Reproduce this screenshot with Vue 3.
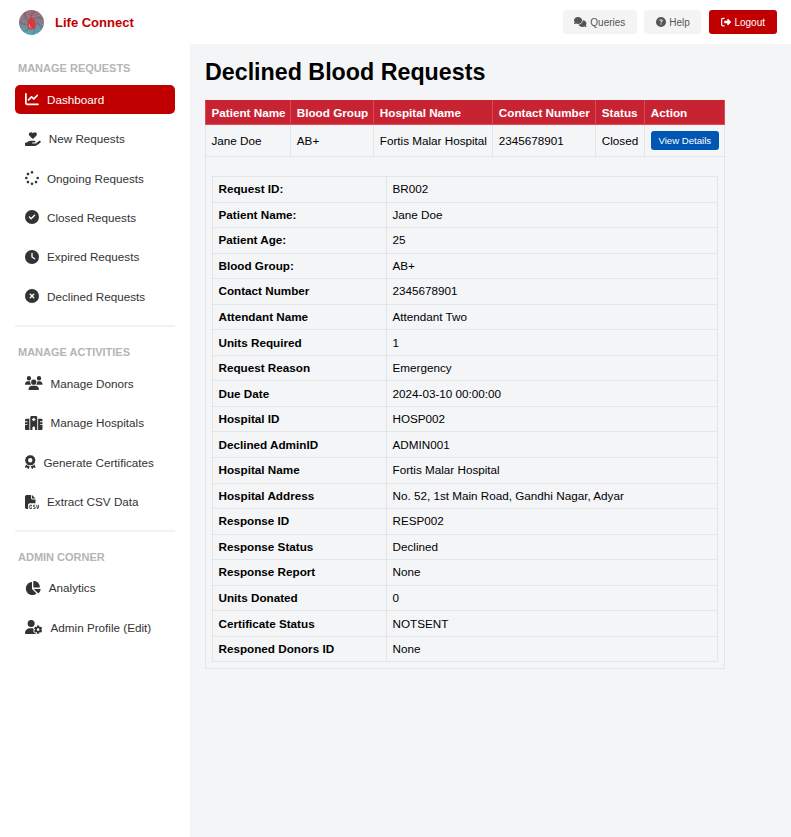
<script setup>
const icons = {
  chart: [512, 'M64 64c0-17.7-14.3-32-32-32S0 46.3 0 64V400c0 44.2 35.8 80 80 80H480c17.7 0 32-14.3 32-32s-14.3-32-32-32H80c-8.8 0-16-7.2-16-16V64zm406.6 86.6c12.5-12.5 12.5-32.8 0-45.3s-32.8-12.5-45.3 0L320 210.7l-57.4-57.4c-12.5-12.5-32.8-12.5-45.3 0l-112 112c-12.5 12.5-12.5 32.8 0 45.3s32.8 12.5 45.3 0L240 221.3l57.4 57.4c12.5 12.5 32.8 12.5 45.3 0l128-128z'],
  heart: [576, 'M163.9 136.9c-29.4-29.8-29.4-78.2 0-108s77-29.8 106.4 0l17.7 18 17.7-18c29.4-29.8 77-29.8 106.4 0s29.4 78.2 0 108L310.5 240.1c-6.2 6.3-14.3 9.4-22.5 9.4s-16.3-3.1-22.5-9.4L163.9 136.9zM568.2 336.3c13.1 17.8 9.3 42.8-8.5 55.9L433.1 485.5c-23.4 17.2-51.6 26.5-80.7 26.5H192 32c-17.7 0-32-14.3-32-32V416c0-17.7 14.3-32 32-32H68.8l44.9-36c22.7-18.2 50.9-28 80-28H272h16 64c17.7 0 32 14.3 32 32s-14.3 32-32 32H288 272c-8.8 0-16 7.2-16 16s7.2 16 16 16H392.6l119.7-88.2c17.8-13.1 42.8-9.3 55.9 8.5z'],
  spinner: [512, 'M304 48a48 48 0 1 0 -96 0 48 48 0 1 0 96 0zm0 416a48 48 0 1 0 -96 0 48 48 0 1 0 96 0zM48 304a48 48 0 1 0 0-96 48 48 0 1 0 0 96zm464-48a48 48 0 1 0 -96 0 48 48 0 1 0 96 0zM142.9 437A48 48 0 1 0 75 369.1 48 48 0 1 0 142.9 437zm0-294.2A48 48 0 1 0 75 75a48 48 0 1 0 67.9 67.9zM369.1 437A48 48 0 1 0 437 369.1 48 48 0 1 0 369.1 437z'],
  check: [512, 'M256 512A256 256 0 1 0 256 0a256 256 0 1 0 0 512zM369 209L241 337c-9.4 9.4-24.6 9.4-33.9 0l-64-64c-9.4-9.4-9.4-24.6 0-33.9s24.6-9.4 33.9 0l47 47L335 175c9.4-9.4 24.6-9.4 33.9 0s9.4 24.6 0 33.9z'],
  clock: [512, 'M256 0a256 256 0 1 1 0 512A256 256 0 1 1 256 0zM232 120V256c0 8 4 15.5 10.7 20l96 64c11 7.4 25.9 4.4 33.3-6.7s4.4-25.9-6.7-33.3L280 243.2V120c0-13.3-10.7-24-24-24s-24 10.7-24 24z'],
  xmark: [512, 'M256 512A256 256 0 1 0 256 0a256 256 0 1 0 0 512zM175 175c9.4-9.4 24.6-9.4 33.9 0l47 47 47-47c9.4-9.4 24.6-9.4 33.9 0s9.4 24.6 0 33.9l-47 47 47 47c9.4 9.4 9.4 24.6 0 33.9s-24.6 9.4-33.9 0l-47-47-47 47c-9.4 9.4-24.6 9.4-33.9 0s-9.4-24.6 0-33.9l47-47-47-47c-9.4-9.4-9.4-24.6 0-33.9z'],
  users: [640, 'M144 0a80 80 0 1 1 0 160A80 80 0 1 1 144 0zM512 0a80 80 0 1 1 0 160A80 80 0 1 1 512 0zM0 298.7C0 239.8 47.8 192 106.7 192h42.7c15.9 0 31 3.5 44.6 9.7c-1.3 7.2-1.9 14.7-1.9 22.3c0 38.2 16.8 72.5 43.3 96c-.2 0-.4 0-.7 0H21.3C9.6 320 0 310.4 0 298.7zM405.3 320c-.2 0-.4 0-.7 0c26.6-23.5 43.3-57.8 43.3-96c0-7.6-.7-15-1.9-22.3c13.6-6.3 28.7-9.7 44.6-9.7h42.7C592.2 192 640 239.8 640 298.7c0 11.8-9.6 21.3-21.3 21.3H405.3zM224 224a96 96 0 1 1 192 0 96 96 0 1 1 -192 0zM128 485.3C128 411.7 187.7 352 261.3 352H378.7C452.3 352 512 411.7 512 485.3c0 14.7-11.9 26.7-26.7 26.7H154.7c-14.7 0-26.7-11.9-26.7-26.7z'],
  hospital: [640, 'M192 48c0-26.5 21.5-48 48-48H400c26.5 0 48 21.5 48 48V512H368V432c0-26.5-21.5-48-48-48s-48 21.5-48 48v80H192V48zM48 96H160V512H48c-26.5 0-48-21.5-48-48V320H80c8.8 0 16-7.2 16-16s-7.2-16-16-16H0V224H80c8.8 0 16-7.2 16-16s-7.2-16-16-16H0V144c0-26.5 21.5-48 48-48zm544 0c26.5 0 48 21.5 48 48v48H560c-8.8 0-16 7.2-16 16s7.2 16 16 16h80v64H560c-8.8 0-16 7.2-16 16s7.2 16 16 16h80V464c0 26.5-21.5 48-48 48H480V96H592zM312 64c-8.8 0-16 7.2-16 16v24H272c-8.8 0-16 7.2-16 16v16c0 8.8 7.2 16 16 16h24v24c0 8.8 7.2 16 16 16h16c8.8 0 16-7.2 16-16V152h24c8.8 0 16-7.2 16-16V120c0-8.8-7.2-16-16-16H344V80c0-8.8-7.2-16-16-16H312z'],
  award: [384, 'M173.8 5.5c11-7.3 25.4-7.3 36.4 0L228 17.2c6 3.9 13 5.8 20.1 5.4l21.3-1.3c13.2-.8 25.6 6.4 31.5 18.2l9.6 19.1c3.2 6.4 8.4 11.5 14.7 14.7L344.5 83c11.8 5.9 19 18.3 18.2 31.5l-1.3 21.3c-.4 7.1 1.5 14.2 5.4 20.1l11.8 17.8c7.3 11 7.3 25.4 0 36.4L366.8 228c-3.9 6-5.8 13-5.4 20.1l1.3 21.3c.8 13.2-6.4 25.6-18.2 31.5l-19.1 9.6c-6.4 3.2-11.5 8.4-14.7 14.7L301 344.5c-5.9 11.8-18.3 19-31.5 18.2l-21.3-1.3c-7.1-.4-14.2 1.5-20.1 5.4l-17.8 11.8c-11 7.3-25.4 7.3-36.4 0L156 366.8c-6-3.9-13-5.8-20.1-5.4l-21.3 1.3c-13.2 .8-25.6-6.4-31.5-18.2l-9.6-19.1c-3.2-6.4-8.4-11.5-14.7-14.7L39.5 301c-11.8-5.9-19-18.3-18.2-31.5l1.3-21.3c.4-7.1-1.5-14.2-5.4-20.1L5.5 210.2c-7.3-11-7.3-25.4 0-36.4L17.2 156c3.9-6 5.8-13 5.4-20.1l-1.3-21.3c-.8-13.2 6.4-25.6 18.2-31.5l19.1-9.6C65 70.2 70.2 65 73.4 58.6L83 39.5c5.9-11.8 18.3-19 31.5-18.2l21.3 1.3c7.1 .4 14.2-1.5 20.1-5.4L173.8 5.5zM272 192a80 80 0 1 0 -160 0 80 80 0 1 0 160 0zM1.3 441.8L44.4 339.3c.2 .1 .3 .2 .4 .4l9.6 19.1c11.7 23.2 36 37.3 62 35.8l21.3-1.3c.2 0 .5 0 .7 .2l17.8 11.8c5.1 3.3 10.5 5.9 16.1 7.7l-37.6 89.3c-2.3 5.5-7.4 9.2-13.3 9.7s-11.6-2.2-14.8-7.2L74.4 455.5l-56.1 8.3c-5.7 .8-11.4-1.5-15-6s-4.3-10.7-2.1-16zm248 60.4L211.7 413c5.6-1.8 11-4.3 16.1-7.7l17.8-11.8c.2-.1 .4-.2 .7-.2l21.3 1.3c26 1.5 50.3-12.6 62-35.8l9.6-19.1c.1-.2 .2-.3 .4-.4l43.2 102.5c2.2 5.3 1.4 11.4-2.1 16s-9.3 6.9-15 6l-56.1-8.3-32.2 49.2c-3.2 5-8.9 7.7-14.8 7.2s-11-4.3-13.3-9.7z'],
  csv: [512, 'M0 64C0 28.7 28.7 0 64 0H224V128c0 17.7 14.3 32 32 32H384V304H176c-35.3 0-64 28.7-64 64V512H64c-35.3 0-64-28.7-64-64V64zm384 64H256V0L384 128zM200 352h16c22.1 0 40 17.9 40 40v8c0 8.8-7.2 16-16 16s-16-7.2-16-16v-8c0-4.4-3.6-8-8-8H200c-4.4 0-8 3.6-8 8v80c0 4.4 3.6 8 8 8h16c4.4 0 8-3.6 8-8v-8c0-8.8 7.2-16 16-16s16 7.2 16 16v8c0 22.1-17.9 40-40 40H200c-22.1 0-40-17.9-40-40V392c0-22.1 17.9-40 40-40zm133.1 0H368c8.8 0 16 7.2 16 16s-7.2 16-16 16H333.1c-7.2 0-13.1 5.9-13.1 13.1c0 5.2 3 9.9 7.8 12l37.4 16.6c16.3 7.2 26.8 23.4 26.8 41.2c0 24.9-20.2 45.1-45.1 45.1H304c-8.8 0-16-7.2-16-16s7.2-16 16-16h47.1c7.2 0 13.1-5.9 13.1-13.1c0-5.2-3-9.9-7.8-12l-37.4-16.6c-16.3-7.2-26.8-23.4-26.8-41.2c0-24.9 20.2-45.1 45.1-45.1zm98.9 0c8.8 0 16 7.2 16 16v31.6c0 23 5.5 45.6 16 66c10.5-20.3 16-42.9 16-66V368c0-8.8 7.2-16 16-16s16 7.2 16 16v31.6c0 34.7-10.3 68.7-29.6 97.6l-5.1 7.7c-3 4.5-8 7.1-13.3 7.1s-10.3-2.7-13.3-7.1l-5.1-7.7c-19.3-28.9-29.6-62.9-29.6-97.6V368c0-8.8 7.2-16 16-16z'],
  pie: [576, 'M304 240V16.6c0-9 7-16.6 16-16.6C443.7 0 544 100.3 544 224c0 9-7.6 16-16.6 16H304zM32 272C32 150.7 122.1 50.3 239 34.3c9.2-1.3 17 6.1 17 15.4V288L412.5 444.5c6.7 6.7 6.2 17.7-1.5 23.1C371.8 495.6 323.8 512 272 512C139.5 512 32 404.6 32 272zm526.4 16c9.3 0 16.6 7.8 15.4 17c-7.7 55.9-34.6 105.6-73.9 142.3c-6 5.6-15.4 5.2-21.2-.7L320 288H558.4z'],
  usergear: [640, 'M224 0a128 128 0 1 1 0 256A128 128 0 1 1 224 0zM178.3 304h91.4c11.8 0 23.4 1.2 34.5 3.3c-2.1 18.5 7.4 35.6 21.8 44.8c-16.6 10.6-26.7 31.6-20 53.3c4 12.9 9.4 25.5 16.4 37.6s15.2 23.1 24.4 33c15.7 16.9 39.6 18.4 57.2 8.7v.9c0 9.2 2.7 18.5 7.9 26.3H29.7C13.3 512 0 498.7 0 482.3C0 383.8 79.8 304 178.3 304zM436 218.2c0-7 4.5-13.3 11.3-14.8c10.5-2.4 21.5-3.7 32.7-3.7s22.2 1.3 32.7 3.7c6.8 1.5 11.3 7.8 11.3 14.8v30.6c7.9 3.4 15.4 7.7 22.3 12.8l24.9-14.3c6.1-3.5 13.7-2.7 18.5 2.4c7.6 8.1 14.3 17.2 20.1 27.2s10.3 20.4 13.5 31c2.1 6.7-1.1 13.7-7.2 17.2l-25 14.4c.4 4 .7 8.1 .7 12.3s-.2 8.2-.7 12.3l25 14.4c6.1 3.5 9.2 10.5 7.2 17.2c-3.3 10.6-7.8 21-13.5 31s-12.5 19.1-20.1 27.2c-4.8 5.1-12.5 5.9-18.5 2.4l-24.9-14.3c-6.9 5.1-14.3 9.4-22.3 12.8l0 30.6c0 7-4.5 13.3-11.3 14.8c-10.5 2.4-21.5 3.7-32.7 3.7s-22.2-1.3-32.7-3.7c-6.8-1.5-11.3-7.8-11.3-14.8V454.8c-8-3.4-15.6-7.7-22.5-12.9l-24.7 14.3c-6.1 3.5-13.7 2.7-18.5-2.4c-7.6-8.1-14.3-17.2-20.1-27.2s-10.3-20.4-13.5-31c-2.1-6.7 1.1-13.7 7.2-17.2l24.8-14.3c-.4-4.1-.7-8.2-.7-12.4s.2-8.3 .7-12.4L343.8 325c-6.1-3.5-9.2-10.5-7.2-17.2c3.3-10.6 7.7-21 13.5-31s12.5-19.1 20.1-27.2c4.8-5.1 12.4-5.9 18.5-2.4l24.8 14.3c6.9-5.1 14.5-9.4 22.5-12.9V218.2zm92.1 133.5a48.1 48.1 0 1 0 -96.1 0 48.1 48.1 0 1 0 96.1 0z'],
  comments: [640, 'M208 352c114.9 0 208-78.8 208-176S322.9 0 208 0S0 78.8 0 176c0 38.6 14.7 74.3 39.6 103.4c-3.5 9.4-8.7 17.7-14.2 24.7c-4.8 6.2-9.7 11-13.3 14.3c-1.8 1.6-3.3 2.9-4.3 3.7c-.5 .4-.9 .7-1.1 .8l-.2 .2 0 0 0 0C1 327.2-1.4 334.4 .8 340.9S9.1 352 16 352c21.8 0 43.8-5.6 62.1-12.5c9.2-3.5 17.8-7.4 25.3-11.4C134.1 343.3 169.8 352 208 352zM448 176c0 112.3-99.1 196.9-216.5 207C255.8 457.4 336.4 512 432 512c38.2 0 73.9-8.7 104.7-23.9c7.5 4 16 7.9 25.2 11.4c18.3 6.9 40.3 12.5 62.1 12.5c6.9 0 13.1-4.5 15.2-11.1c2.1-6.6-.2-13.8-5.8-17.9l0 0 0 0-.2-.2c-.2-.2-.6-.4-1.1-.8c-1-.8-2.5-2-4.3-3.7c-3.6-3.3-8.5-8.1-13.3-14.3c-5.5-7-10.7-15.4-14.2-24.7c24.9-29 39.6-64.7 39.6-103.4c0-92.8-84.9-168.9-192.6-175.5c.4 5.1 .6 10.3 .6 15.5z'],
  question: [512, 'M256 512A256 256 0 1 0 256 0a256 256 0 1 0 0 512zM169.8 165.3c7.9-22.3 29.1-37.3 52.8-37.3h58.3c34.9 0 63.1 28.3 63.1 63.1c0 22.6-12.1 43.5-31.7 54.8L280 264.4c-.2 13-10.9 23.6-24 23.6c-13.3 0-24-10.7-24-24V250.5c0-8.6 4.6-16.5 12.1-20.8l44.3-25.4c4.7-2.7 7.6-7.7 7.6-13.1c0-8.4-6.8-15.1-15.1-15.1H222.6c-3.4 0-6.4 2.1-7.5 5.3l-.4 1.2c-4.4 12.5-18.2 19-30.6 14.6s-19-18.2-14.6-30.6l.4-1.2zM224 352a32 32 0 1 1 64 0 32 32 0 1 1 -64 0z'],
  logout: [512, 'M377.9 105.9L500.7 228.7c7.2 7.2 11.3 17.1 11.3 27.3s-4.1 20.1-11.3 27.3L377.9 406.1c-6.4 6.4-15 9.9-24 9.9c-18.7 0-33.9-15.2-33.9-33.9l0-62.1-128 0c-17.7 0-32-14.3-32-32l0-64c0-17.7 14.3-32 32-32l128 0 0-62.1c0-18.7 15.2-33.9 33.9-33.9c9 0 17.6 3.5 24 9.9zM160 96L96 96c-17.7 0-32 14.3-32 32l0 256c0 17.7 14.3 32 32 32l64 0c17.7 0 32 14.3 32 32s-14.3 32-32 32l-64 0c-53 0-96-43-96-96L0 128C0 75 43 32 96 32l64 0c17.7 0 32 14.3 32 32s-14.3 32-32 32z']
}

const sections = [
  {
    title: 'MANAGE REQUESTS',
    items: [
      { label: 'Dashboard', icon: 'chart', active: true },
      { label: 'New Requests', icon: 'heart' },
      { label: 'Ongoing Requests', icon: 'spinner' },
      { label: 'Closed Requests', icon: 'check' },
      { label: 'Expired Requests', icon: 'clock' },
      { label: 'Declined Requests', icon: 'xmark' }
    ]
  },
  {
    title: 'MANAGE ACTIVITIES',
    items: [
      { label: 'Manage Donors', icon: 'users' },
      { label: 'Manage Hospitals', icon: 'hospital' },
      { label: 'Generate Certificates', icon: 'award' },
      { label: 'Extract CSV Data', icon: 'csv' }
    ]
  },
  {
    title: 'ADMIN CORNER',
    items: [
      { label: 'Analytics', icon: 'pie' },
      { label: 'Admin Profile (Edit)', icon: 'usergear' }
    ]
  }
]

const details = [
  ['Request ID:', 'BR002'],
  ['Patient Name:', 'Jane Doe'],
  ['Patient Age:', '25'],
  ['Blood Group:', 'AB+'],
  ['Contact Number', '2345678901'],
  ['Attendant Name', 'Attendant Two'],
  ['Units Required', '1'],
  ['Request Reason', 'Emergency'],
  ['Due Date', '2024-03-10 00:00:00'],
  ['Hospital ID', 'HOSP002'],
  ['Declined AdminID', 'ADMIN001'],
  ['Hospital Name', 'Fortis Malar Hospital'],
  ['Hospital Address', 'No. 52, 1st Main Road, Gandhi Nagar, Adyar'],
  ['Response ID', 'RESP002'],
  ['Response Status', 'Declined'],
  ['Response Report', 'None'],
  ['Units Donated', '0'],
  ['Certificate Status', 'NOTSENT'],
  ['Responed Donors ID', 'None']
]

// speckle for the round logo
const specks = []
for (let i = 0; i < 90; i++) {
  const a = i * 2.39996
  const r = 11.5 * Math.sqrt((i + 0.5) / 90)
  specks.push({ x: 12 + r * Math.cos(a), y: 12 + r * Math.sin(a), light: i % 3 !== 0 })
}
</script>

<template>
  <div class="page">
    <header class="topbar">
      <div class="brand">
        <svg class="logo" viewBox="0 0 24 24" width="25" height="25">
          <defs>
            <linearGradient id="logoFill" x1="0" y1="0" x2="0" y2="1">
              <stop offset="0" stop-color="#9c6470" />
              <stop offset="0.55" stop-color="#7c7c88" />
              <stop offset="1" stop-color="#4aacb6" />
            </linearGradient>
          </defs>
          <circle cx="12" cy="12" r="12" fill="url(#logoFill)" />
          <circle
            v-for="(s, i) in specks"
            :key="i"
            :cx="s.x"
            :cy="s.y"
            r="0.5"
            :fill="s.light ? '#e0d4d8' : '#2d2a35'"
            opacity="0.4"
          />
          <path d="M12 6c2.300 3 4 5.300 4 8.600a4 4.200 0 0 1-8 0c0-3.300 1.700-5.600 4-8.600z" fill="#d63a40" />
          <path d="M10 14c-.2 1.700.5 2.800 1.700 3.200" stroke="#f6c8c8" stroke-width=".8" fill="none" />
        </svg>
        <span class="brand-name">Life Connect</span>
      </div>
      <div class="top-actions">
        <button class="top-btn">
          <svg :viewBox="`0 0 ${icons.comments[0]} 512`" class="top-icon"><path :d="icons.comments[1]" /></svg>
          Queries
        </button>
        <button class="top-btn">
          <svg :viewBox="`0 0 ${icons.question[0]} 512`" class="top-icon"><path :d="icons.question[1]" /></svg>
          Help
        </button>
        <button class="top-btn logout">
          <svg :viewBox="`0 0 ${icons.logout[0]} 512`" class="top-icon"><path :d="icons.logout[1]" /></svg>
          Logout
        </button>
      </div>
    </header>

    <div class="body">
      <aside class="sidebar">
        <section v-for="(section, i) in sections" :key="section.title" class="side-section" :class="{ ruled: i < sections.length - 1 }">
          <h4 class="side-title">{{ section.title }}</h4>
          <a v-for="item in section.items" :key="item.label" class="side-item" :class="{ active: item.active }">
            <svg :viewBox="`0 0 ${icons[item.icon][0]} 512`" class="side-icon"><path :d="icons[item.icon][1]" /></svg>
            <span>{{ item.label }}</span>
          </a>
        </section>
      </aside>

      <main class="content">
        <h1>Declined Blood Requests</h1>
        <table class="requests">
          <colgroup>
            <col class="c-patient" />
            <col class="c-group" />
            <col class="c-hospital" />
            <col class="c-contact" />
            <col class="c-status" />
            <col class="c-action" />
          </colgroup>
          <thead>
            <tr>
              <th>Patient Name</th>
              <th>Blood Group</th>
              <th>Hospital Name</th>
              <th>Contact Number</th>
              <th>Status</th>
              <th>Action</th>
            </tr>
          </thead>
          <tbody>
            <tr>
              <td>Jane Doe</td>
              <td>AB+</td>
              <td>Fortis Malar Hospital</td>
              <td>2345678901</td>
              <td>Closed</td>
              <td><button class="view-btn">View Details</button></td>
            </tr>
            <tr>
              <td colspan="6" class="details-cell">
                <table class="details">
                  <tbody>
                    <tr v-for="row in details" :key="row[0]">
                      <td class="key">{{ row[0] }}</td>
                      <td>{{ row[1] }}</td>
                    </tr>
                  </tbody>
                </table>
              </td>
            </tr>
          </tbody>
        </table>
      </main>
    </div>
  </div>
</template>

<style>
html, body {
  margin: 0;
  background: #fff;
}
</style>

<style scoped>
.page {
  width: 791px;
  height: 837px;
  display: flex;
  flex-direction: column;
  overflow: hidden;
  font-family: "Liberation Sans", Arial, sans-serif;
  font-size: 11.7px;
  color: #333;
}

.topbar {
  height: 44px;
  flex: none;
  display: flex;
  align-items: center;
  justify-content: space-between;
  padding: 0 14px 0 19px;
  background: #fff;
  box-sizing: border-box;
}

.brand {
  display: flex;
  align-items: center;
  gap: 11px;
}

.logo {
  display: block;
}

.brand-name {
  color: #c00000;
  font-size: 13px;
  font-weight: bold;
}

.top-actions {
  display: flex;
  gap: 7.500px;
}

.top-btn {
  display: flex;
  align-items: center;
  justify-content: center;
  gap: 3.500px;
  height: 23.500px;
  padding: 0 11.500px;
  border: none;
  border-radius: 3px;
  background: #f4f4f4;
  color: #555;
  font-family: inherit;
  font-size: 10px;
}

.top-btn.logout {
  background: #c00000;
  color: #fff;
  padding: 0 12px;
}

.top-icon {
  height: 10px;
  fill: currentColor;
}

.body {
  flex: 1;
  display: flex;
  min-height: 0;
}

.sidebar {
  width: 190px;
  flex: none;
  padding: 0 15px;
  box-sizing: border-box;
  background: #fff;
}

.side-section {
  padding-top: 17.750px;
}

.side-section.ruled {
  padding-bottom: 14.250px;
  border-bottom: 2px solid #f2f2f2;
}

.side-section.ruled + .side-section {
  padding-top: 18.750px;
}

.side-section:last-child .side-title {
  margin-bottom: 9px;
}

.side-title {
  margin: 0 0 10px 3px;
  font-size: 11px;
  line-height: 13px;
  font-weight: bold;
  color: #b5b5b5;
}

.side-item {
  display: flex;
  align-items: center;
  gap: 8px;
  height: 29.350px;
  margin-bottom: 10px;
  padding: 0 10px;
  border-radius: 5px;
  color: #333;
}

.side-section .side-item:last-child {
  margin-bottom: 0;
}

.side-item.active {
  background: #c00000;
  color: #fff;
}

.side-icon {
  height: 14px;
  flex: none;
  fill: currentColor;
}

.content {
  flex: 1;
  padding: 15px 66px 0 15px;
  background: #f4f5f7;
  box-sizing: border-box;
  min-width: 0;
}

h1 {
  margin: 0 0 15px;
  color: #000;
  font-size: 23.250px;
  line-height: 26px;
  font-weight: bold;
}

table {
  border-collapse: collapse;
}

.requests {
  width: 519px;
  table-layout: fixed;
}

.c-patient { width: 85.300px; }
.c-group { width: 83px; }
.c-hospital { width: 119px; }
.c-contact { width: 103px; }
.c-status { width: 49px; }
.c-action { width: 79.700px; }

.requests th {
  padding: 5px 5.500px;
  background: #c82333;
  border: 1px solid #dc4a58;
  border-top-color: #c82333;
  color: #fff;
  line-height: 13px;
  font-weight: bold;
  text-align: left;
  white-space: nowrap;
}

.requests td {
  padding: 6px 5.500px;
  border: 1px solid #e3e5e8;
  color: #000;
  line-height: 18px;
  white-space: nowrap;
}

.requests .details-cell {
  padding: 19px 5.500px 6px;
}

.view-btn {
  display: block;
  height: 19px;
  width: 68px;
  padding: 0;
  border: none;
  border-radius: 3px;
  background: #0056b3;
  color: #fff;
  font-family: inherit;
  font-size: 9.600px;
}

.details {
  width: 100%;
}

.requests .details td {
  height: 25.550px;
  padding: 0 6px;
  box-sizing: border-box;
  line-height: 14px;
  border: 1px solid #e3e5e8;
}

.requests .details .key {
  width: 174px;
  font-weight: bold;
}
</style>
